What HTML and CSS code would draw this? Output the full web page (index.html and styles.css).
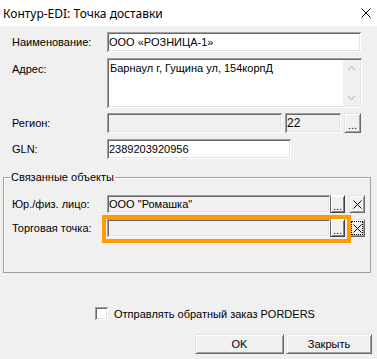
FILE: index.html
```html
<!DOCTYPE html>
<html lang="ru">
<head>
    <meta charset="UTF-8">
    <title>Контур-EDI: Точка доставки</title>
    <link rel="stylesheet" href="styles.css">
</head>
<body>

    <!-- Title Bar -->
    <div class="titlebar">
        <span class="title">Контур-EDI: Точка доставки</span>
        <svg class="close" width="10" height="10" viewBox="0 0 10 10">
            <path d="M0.5 0.5 L9.5 9.5 M9.5 0.5 L0.5 9.5" stroke="#000" stroke-width="1" fill="none"/>
        </svg>
    </div>

    <!-- Main Fields -->
    <div class="form">
        <div class="row">
            <label>Наименование:</label>
            <input class="field name" type="text" value="ООО «РОЗНИЦА-1»">
        </div>

        <div class="row row-address">
            <label class="top">Адрес:</label>
            <div class="field memo">
                <div class="memo-text">Барнаул г, Гущина ул, 154корпД</div>
                <div class="scrollbar">
                    <svg width="17" height="17" viewBox="0 0 17 17"><path d="M5 10 L8.5 6.5 L12 10" stroke="#c4c4c4" stroke-width="1.2" fill="none"/></svg>
                    <svg width="17" height="17" viewBox="0 0 17 17"><path d="M5 7 L8.5 10.5 L12 7" stroke="#c4c4c4" stroke-width="1.2" fill="none"/></svg>
                </div>
            </div>
        </div>

        <div class="row row-region">
            <label>Регион:</label>
            <input class="field grey region" type="text" value="" readonly>
            <input class="field grey code" type="text" value="22" readonly>
            <button class="btn dots">...</button>
        </div>

        <div class="row row-gln">
            <label>GLN:</label>
            <input class="field gln" type="text" value="2389203920956">
        </div>
    </div>

    <!-- Linked Objects -->
    <fieldset class="group">
        <legend>Связанные объекты</legend>

        <div class="row small">
            <label>Юр./физ. лицо:</label>
            <span class="pick">
                <input class="field grey link" type="text" value='ООО "Ромашка"' readonly>
                <button class="btn dots dark">...</button>
            </span>
            <button class="btn clear" title="X">
                <svg width="9" height="9" viewBox="0 0 9 9"><path d="M0.5 0.5 L8.5 8.5 M8.5 0.5 L0.5 8.5" stroke="#000" stroke-width="1" fill="none"/></svg>
            </button>
        </div>

        <div class="row small row-point">
            <label>Торговая точка:</label>
            <span class="pick marked">
                <input class="field grey link" type="text" value="" readonly>
                <button class="btn dots dark">...</button>
            </span>
            <button class="btn clear" title="X">
                <span class="focus">
                    <svg width="9" height="9" viewBox="0 0 9 9"><path d="M0.5 0.5 L8.5 8.5 M8.5 0.5 L0.5 8.5" stroke="#000" stroke-width="1" fill="none"/></svg>
                </span>
            </button>
        </div>
    </fieldset>

    <!-- Option -->
    <div class="option">
        <span class="checkbox"></span>
        <span>Отправлять обратный заказ PORDERS</span>
    </div>

    <!-- Dialog Buttons -->
    <div class="actions">
        <button class="btn ok">OK</button>
        <button class="btn close-btn">Закрыть</button>
    </div>

</body>
</html>
```

FILE: styles.css
```css
* {
    box-sizing: border-box;
}

body {
    margin: 0;
    width: 377px;
    height: 359px;
    overflow: hidden;
    background-color: #f0f0f0;
    font-family: "Liberation Sans", Arial, sans-serif;
    font-size: 11px;
    color: #000;
}

/* Title Bar */
.titlebar {
    height: 26px;
    background-color: #fff;
    display: flex;
    align-items: center;
    justify-content: space-between;
    padding: 0 6px 0 3px;
}

.title {
    font-family: "Noto Sans", sans-serif;
    font-size: 12px;
}

/* Rows */
.form {
    padding: 6px 0 0 12px;
}

.row {
    display: flex;
    align-items: center;
}

.row label {
    width: 95px;
    flex-shrink: 0;
}

.row label.top {
    align-self: flex-start;
    margin-top: 5px;
}

.row-address {
    margin-top: 6px;
    align-items: flex-start;
}

.row-region {
    margin-top: 5px;
}

.row-gln {
    margin-top: 6px;
}

/* Sunken fields */
.field {
    height: 20px;
    border: none;
    margin: 0;
    padding: 0 1px 0 2px;
    background-color: #fff;
    font: inherit;
    color: #000;
    outline: none;
    box-shadow: inset 1px 1px #a0a0a0, inset -1px -1px #fff,
                inset 2px 2px #696969, inset -2px -2px #e3e3e3;
}

.field.grey {
    background-color: #f0f0f0;
}

.name {
    width: 254px;
}

.region {
    width: 175px;
}

.code {
    width: 56px;
    margin-left: 3px;
    font-size: 12px;
}

.gln {
    width: 184px;
}

.memo {
    width: 255px;
    height: 50px;
    padding: 2px;
    display: flex;
}

.memo-text {
    flex: 1;
    padding: 2px 1px;
}

.scrollbar {
    width: 17px;
    background-color: #f0f0f0;
    display: flex;
    flex-direction: column;
    justify-content: space-between;
}

.scrollbar svg {
    display: block;
}

/* Raised buttons */
.btn {
    margin: 0;
    padding: 0;
    border: 1px solid;
    border-color: #e3e3e3 #696969 #696969 #e3e3e3;
    box-shadow: inset 1px 1px #fff, inset -1px -1px #a0a0a0;
    background-color: #f0f0f0;
    font: inherit;
    color: #000;
    cursor: pointer;
}

.dots {
    width: 17px;
    height: 20px;
    margin-left: 3px;
    padding-top: 3px;
}

.dots.dark {
    width: 15px;
    height: 18px;
    margin-left: 0;
    border-color: #fff #404040 #404040 #696969;
    box-shadow: inset 1px 1px #fff, inset -1px -1px #808080;
}

/* Linked Objects */
.group {
    margin: 12px 6px 0 3px;
    padding: 12px 0 35px 8px;
    border: 1px solid #a0a0a0;
    box-shadow: inset 1px 1px #fff;
}

.group legend {
    padding: 0 1px;
    margin-left: -2px;
}

.row.small + .row.small {
    margin-top: 6px;
}

.pick {
    display: flex;
    position: relative;
}

.link {
    width: 223px;
    height: 18px;
}

/* Highlight frame around the selected field */
.pick.marked::after {
    content: "";
    position: absolute;
    top: -4px;
    left: -5px;
    right: -6px;
    bottom: -6px;
    border: 4px solid #ff9c00;
    pointer-events: none;
}

.clear {
    width: 16px;
    height: 18px;
    margin-left: 4px;
    display: flex;
    align-items: center;
    justify-content: center;
}

.clear svg {
    display: block;
}

.focus {
    display: flex;
    align-items: center;
    justify-content: center;
    width: 12px;
    height: 14px;
    border: 1px dotted #000;
}

/* Option */
.option {
    display: flex;
    align-items: center;
    margin-top: 34px;
    padding-left: 95px;
}

.checkbox {
    width: 13px;
    height: 13px;
    margin-right: 6px;
    background-color: #fff;
    box-shadow: inset 1px 1px #a0a0a0, inset -1px -1px #fff,
                inset 2px 2px #696969, inset -2px -2px #e3e3e3;
}

/* Dialog Buttons */
.actions {
    display: flex;
    justify-content: flex-end;
    gap: 2px;
    margin-top: 14px;
    padding-right: 5px;
}

.ok {
    width: 89px;
    height: 20px;
}

.close-btn {
    width: 86px;
    height: 20px;
}
```
